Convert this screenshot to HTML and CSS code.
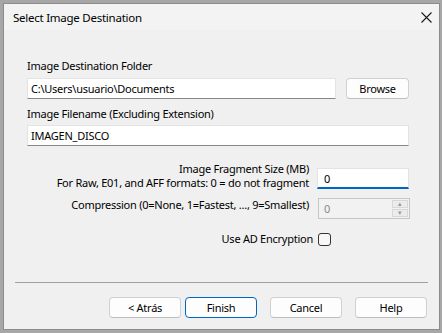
FILE: index.html
```html
<!DOCTYPE html>
<html lang="en">
<head>
  <meta charset="UTF-8" />
  <title>Select Image Destination</title>
  <link rel="stylesheet" href="styles.css">
</head>
<body>
  <div class="window">
    <div class="titlebar">
      <span class="title">Select Image Destination</span>
      <svg class="close" width="11" height="11" viewBox="0 0 11 11">
        <path d="M0.5 0.5 L10.5 10.5 M10.5 0.5 L0.5 10.5" stroke="#1a1a1a" stroke-width="1.1" fill="none"/>
      </svg>
    </div>

    <div class="content">
      <div class="label">Image Destination Folder</div>
      <div class="folder-row">
        <div class="textbox folder">C:\Users\usuario\Documents</div>
        <button class="btn browse">Browse</button>
      </div>

      <div class="label second">Image Filename (Excluding Extension)</div>
      <div class="textbox">IMAGEN_DISCO</div>

      <div class="grid">
        <div class="rlabel">
          <div>Image Fragment Size (MB)</div>
          <div>For Raw, E01, and AFF formats: 0 = do not fragment</div>
        </div>
        <div class="textbox focused">0</div>

        <div class="rlabel">Compression (0=None, 1=Fastest, ..., 9=Smallest)</div>
        <div class="spinner">
          <span class="val">0</span>
          <div class="arrows">
            <span class="arrow">&#9652;</span>
            <span class="arrow">&#9662;</span>
          </div>
        </div>

        <div class="rlabel enc">Use AD Encryption</div>
        <div class="enc-cell"><span class="checkbox"></span></div>
      </div>
    </div>

    <div class="footer">
      <div class="separator"></div>
      <div class="buttons">
        <button class="btn">&lt; Atrás</button>
        <button class="btn primary">Finish</button>
        <button class="btn gap">Cancel</button>
        <button class="btn gap">Help</button>
      </div>
    </div>
  </div>
</body>
</html>
```

FILE: styles.css
```css
html, body {
  margin: 0;
  padding: 0;
}

body {
  background: #a7a7a7;
  font-family: "Noto Sans", "Open Sans", sans-serif;
  font-size: 11px;
  letter-spacing: -0.25px;
  color: #000;
  width: 442px;
  height: 333px;
  overflow: hidden;
}

.window {
  margin: 3px 0 0 3px;
  width: 435px;
  height: 325px;
  background: #f0f0f0;
  border: 1px solid #8c8c8c;
  display: flex;
  flex-direction: column;
}

.titlebar {
  height: 26px;
  background: #f3f3f3;
  display: flex;
  align-items: center;
  justify-content: space-between;
  padding: 0 7px 0 9px;
}

.title {
  font-size: 11.5px;
  padding-top: 1px;
}

.close {
  display: block;
  margin-top: 1px;
}

.content {
  flex: 1;
  padding: 28px 30px 0 23px;
}

.label {
  line-height: 16px;
  height: 16px;
  margin-bottom: 4px;
}

.label.second {
  margin-top: 7px;
  margin-bottom: 3px;
}

.folder-row {
  display: flex;
  gap: 10px;
}

.textbox {
  height: 19px;
  line-height: 19px;
  background: #fff;
  border: 1px solid #e3e3e3;
  border-bottom-color: #878787;
  padding: 0 0 0 3px;
  box-sizing: content-box;
  white-space: nowrap;
  overflow: hidden;
}

.textbox.folder {
  flex: 1;
}

.textbox.focused {
  border-bottom: 2px solid #0067c0;
  height: 18px;
  padding-left: 6px;
  margin-top: 4px;
}

.btn {
  font-family: inherit;
  font-size: 11px;
  letter-spacing: -0.25px;
  color: #000;
  background: #fdfdfd;
  border: 1px solid #d0d0d0;
  border-bottom-color: #bdbdbd;
  border-radius: 4px;
  height: 21px;
  padding: 0;
  width: 72px;
}

.btn.browse {
  width: 63px;
}

.btn.primary {
  border: 1px solid #0067c0;
}

.grid {
  display: grid;
  grid-template-columns: minmax(0, 1fr) 92px;
  column-gap: 8px;
  margin-top: 16px;
  align-items: center;
}

.rlabel {
  text-align: right;
  line-height: 14px;
  white-space: nowrap;
}

.grid > .rlabel:first-child {
  align-self: start;
}

.spinner {
  margin-top: 8px;
  height: 19px;
  background: #f2f2f2;
  border: 1px solid #c6c6c6;
  display: flex;
  margin-left: 1px;
  margin-right: -1px;
}

.spinner .val {
  flex: 1;
  color: #8a8a8a;
  line-height: 19px;
  padding-left: 5px;
}

.arrows {
  width: 16px;
  display: flex;
  flex-direction: column;
  gap: 1px;
  padding: 1px 1px 1px 0;
}

.arrow {
  flex: 1;
  background: #ececec;
  border: 1px solid #d8d8d8;
  font-size: 7px;
  line-height: 6px;
  color: #9a9a9a;
  text-align: center;
}

.rlabel.enc {
  margin-top: 12px;
  line-height: 16px;
  margin-right: -4px;
}

.enc-cell {
  margin-top: 12px;
  height: 16px;
  display: flex;
  align-items: center;
}

.checkbox {
  width: 11px;
  height: 11px;
  border: 1px solid #333;
  border-radius: 3px;
  background: #f7f7f7;
  margin-left: 1px;
}

.footer {
  padding: 0 12px 11px 11px;
}

.separator {
  height: 1px;
  background: #a0a0a0;
  margin-right: -1px;
}

.buttons {
  margin-top: 14px;
  display: flex;
  justify-content: flex-end;
  gap: 4px;
}

.buttons .gap {
  margin-left: 9px;
}
```
